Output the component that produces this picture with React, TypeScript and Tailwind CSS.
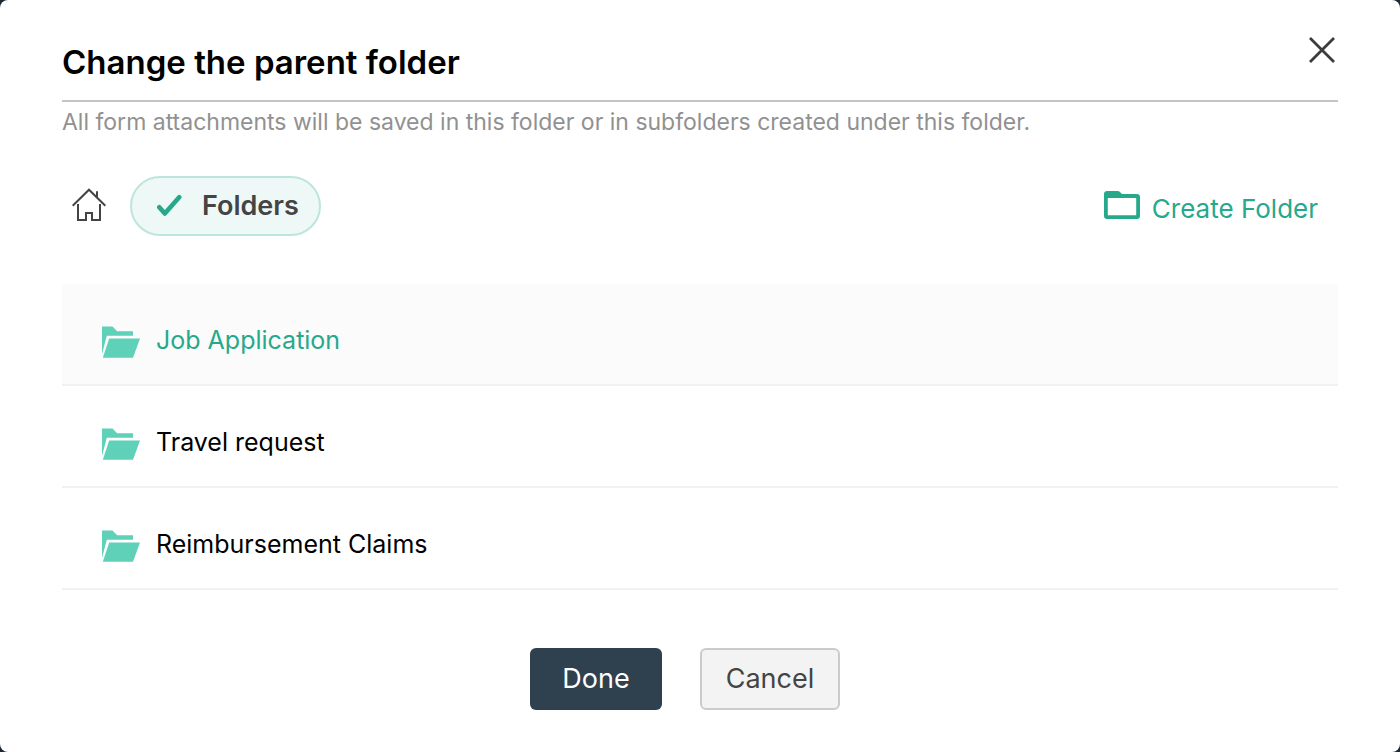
import { useState } from 'react';

const folders = ['Job Application', 'Travel request', 'Reimbursement Claims'];

function CloseIcon() {
  return (
    <svg width="26" height="26" viewBox="0 0 26 26" fill="none" stroke="#3c3c3c" strokeWidth="2.8" aria-hidden="true">
      <path d="M1 1 25 25M25 1 1 25" />
    </svg>
  );
}

function HomeIcon() {
  return (
    <svg width="34" height="34" viewBox="0 0 34 34" fill="none" stroke="#444" strokeWidth="2" aria-hidden="true">
      <path d="M.7 17.700 17 1.700l16.300 16M25 9V3.200" />
      <path d="M6 16v16h8v-7h6v7h8V16" />
    </svg>
  );
}

function CheckIcon() {
  return (
    <svg width="26" height="24" viewBox="0 0 26 24" fill="none" stroke="#26a98b" strokeWidth="4.6" strokeLinecap="round" strokeLinejoin="round" aria-hidden="true">
      <path d="M3.300 13.300 8.800 19.500 23.200 3.200" />
    </svg>
  );
}

function NewFolderIcon() {
  return (
    <svg className="mb-1.5" width="36" height="30" viewBox="0 0 36 30" fill="#26a98b" fillRule="evenodd" aria-hidden="true">
      <path d="M3.500 1h10.200c.8 0 1.500.3 2 .8L18 4h14.500A3.300 3.300 0 0 1 36 7.300v18.400a3.300 3.300 0 0 1-3.500 3.300h-29A3.300 3.300 0 0 1 0 25.700V4.300A3.300 3.300 0 0 1 3.500 1ZM3.800 8v17.200h28.400V8Z" />
    </svg>
  );
}

function OpenFolderIcon() {
  return (
    <svg className="mt-1" width="38" height="32" viewBox="0 0 38 32" fill="#5fd1b9" aria-hidden="true">
      <path d="M0 .5h10.500l4.600 4.700H31v4.600H4.800L0 28Z" />
      <path d="M7.200 12.500H38L31 31.700H.8Z" />
    </svg>
  );
}

export default function App() {
  const [selected, setSelected] = useState(0);

  return (
    <div className="min-h-screen bg-[#1d2731] font-['Inter','Liberation_Sans',sans-serif]">
      <main role="dialog" aria-labelledby="dialog-title" className="min-h-screen rounded-lg bg-white px-[62px] pt-[34px] pb-[42px]">
        <header className="flex items-start justify-between border-b-2 border-[#c4c4c4] pb-[18px]">
          <h1 id="dialog-title" className="mt-2 text-[33px] leading-10 font-semibold text-black">
            Change the parent folder
          </h1>
          <button type="button" aria-label="Close" className="flex size-8 items-center justify-center">
            <CloseIcon />
          </button>
        </header>
        <p className="pt-1 text-[23px] leading-8 text-[#919191]">
          All form attachments will be saved in this folder or in subfolders created under this folder.
        </p>

        <nav className="mt-[38px] flex items-center justify-between pr-5 pl-2.5">
          <div className="flex items-center gap-6">
            <a href="#home" aria-label="Home" className="pb-0.5">
              <HomeIcon />
            </a>
            <button
              type="button"
              className="flex h-[60px] items-center gap-5 rounded-full border-2 border-[#bce6dc] bg-[#eef8f6] pr-5 pl-6 text-[27px] font-semibold text-[#444]"
            >
              <CheckIcon />
              Folders
            </button>
          </div>
          <button type="button" className="flex items-center gap-3 pt-1 text-[26px] text-[#26a98b]">
            <NewFolderIcon />
            Create Folder
          </button>
        </nav>

        <ul className="mt-12">
          {folders.map((name, i) => (
            <li key={name} className="border-b-2 border-[#f2f2f2]">
              <button
                type="button"
                aria-pressed={selected === i}
                onClick={() => setSelected(i)}
                className={
                  selected === i
                    ? 'flex w-full items-center gap-4 bg-[#fbfbfb] px-10 pt-[38px] pb-[26px] text-left text-[25px] leading-8 text-[#26a98b]'
                    : 'flex w-full items-center gap-4 bg-white px-10 pt-[38px] pb-[26px] text-left text-[25px] leading-8 text-black'
                }
              >
                <OpenFolderIcon />
                {name}
              </button>
            </li>
          ))}
        </ul>

        <footer className="mt-[58px] flex justify-center gap-[38px] pr-[30px] text-[27px]">
          <button type="button" className="h-[62px] min-w-[132px] rounded-md bg-[#2f404f] px-6 text-white">
            Done
          </button>
          <button type="button" className="h-[62px] min-w-[140px] rounded-md border-2 border-[#cbcbcb] bg-[#f3f3f3] px-5 text-[#444]">
            Cancel
          </button>
        </footer>
      </main>
    </div>
  );
}
